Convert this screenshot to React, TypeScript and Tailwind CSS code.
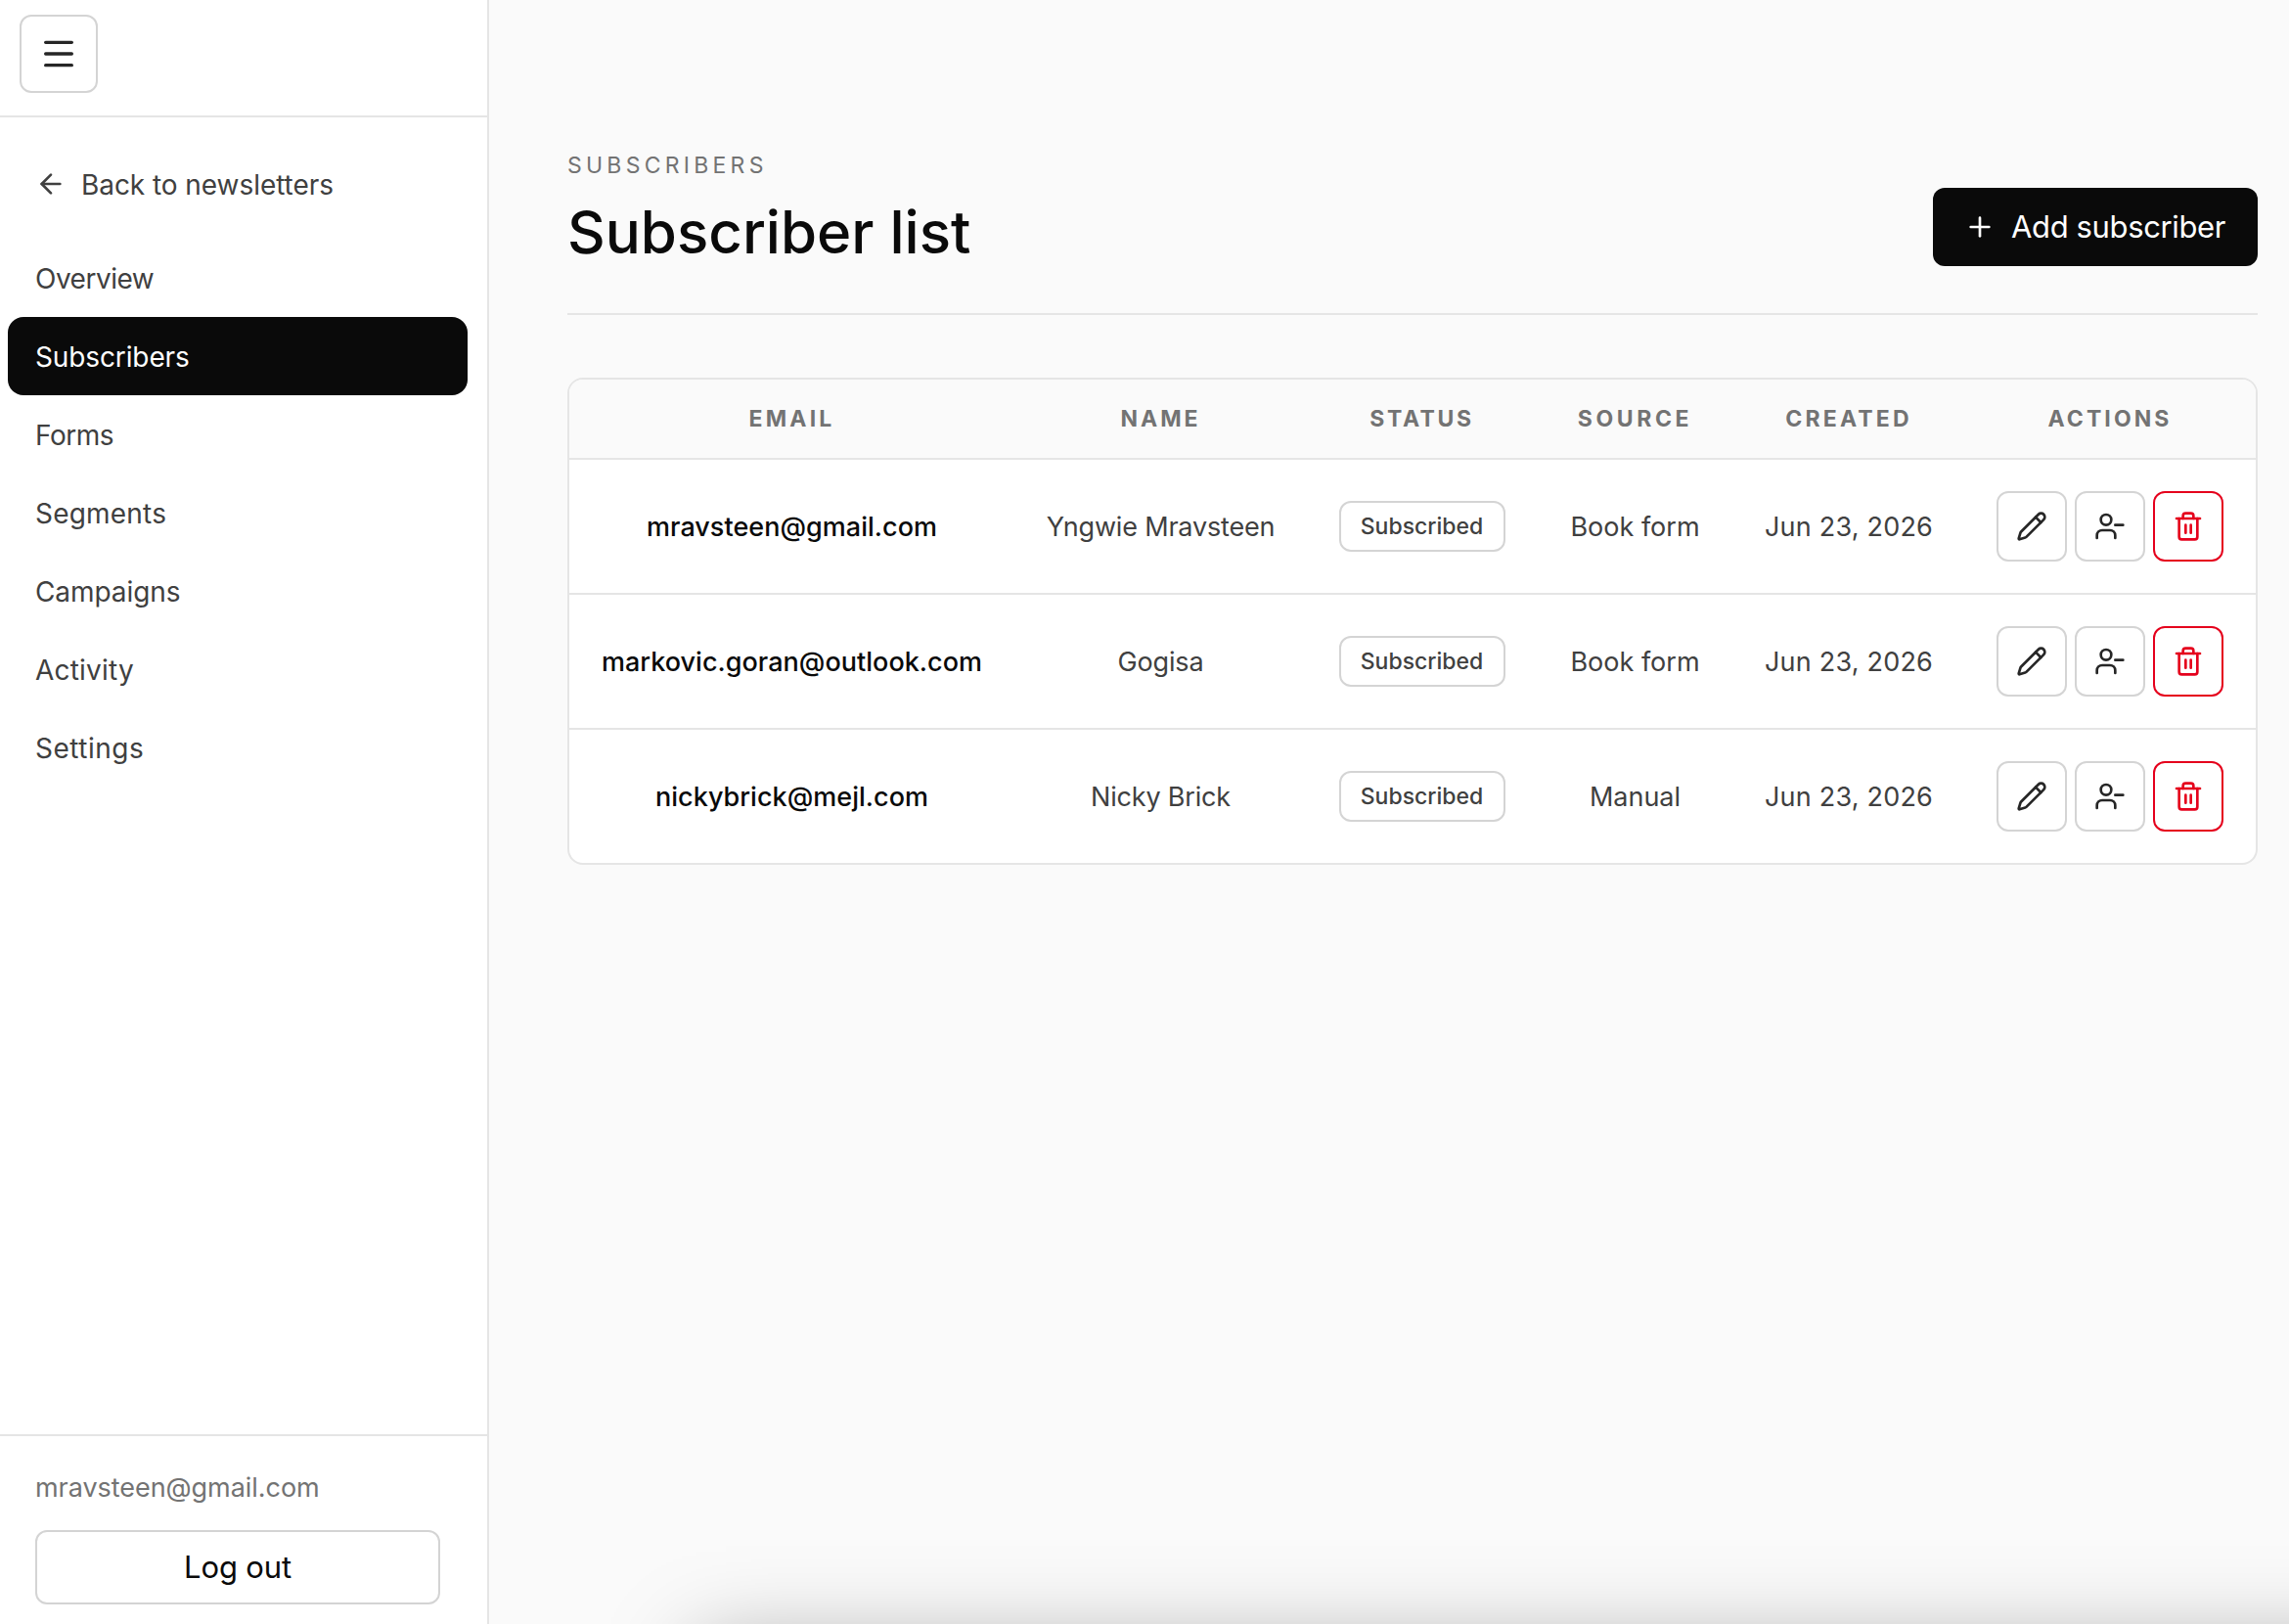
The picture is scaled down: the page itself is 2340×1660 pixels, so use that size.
import React from 'react';
import { ArrowLeft, Menu, Pencil, Plus, Trash2, UserMinus } from 'lucide-react';

const navItems = [
  { label: 'Overview', tracking: 'tracking-[-0.5px]' },
  { label: 'Subscribers', tracking: 'tracking-[-0.12px]', active: true },
  { label: 'Forms', tracking: 'tracking-[-0.5px]' },
  { label: 'Segments', tracking: 'tracking-[0.2px]' },
  { label: 'Campaigns', tracking: 'tracking-[-0.08px]' },
  { label: 'Activity', tracking: 'tracking-[0.2px]' },
  { label: 'Settings', tracking: 'tracking-[0.5px]' },
];

const columns = [
  { label: 'Email', style: 'w-[455px] tracking-[3.2px]' },
  { label: 'Name', style: 'w-[299px] tracking-[3px]' },
  { label: 'Status', style: 'w-[235px] tracking-[2.6px]' },
  { label: 'Source', style: 'w-[201px] tracking-[3.6px]' },
  { label: 'Created', style: 'w-[236px] tracking-[3.2px]' },
  { label: 'Actions', style: 'w-[298px] tracking-[3.1px]' },
];

const subscribers = [
  { email: 'mravsteen@gmail.com', name: 'Yngwie Mravsteen', source: 'Book form', created: 'Jun 23, 2026' },
  { email: 'markovic.goran@outlook.com', name: 'Gogisa', source: 'Book form', created: 'Jun 23, 2026' },
  { email: 'nickybrick@mejl.com', name: 'Nicky Brick', source: 'Manual', created: 'Jun 23, 2026' },
];

const Sidebar = () => (
  <aside className="flex h-full w-[500px] shrink-0 flex-col border-r-2 border-[#e5e5e5] bg-white">
    <div className="h-[120px] border-b-2 border-[#e5e5e5] pt-[15px] pl-5">
      <button className="flex size-20 items-center justify-center rounded-xl border-2 border-[#d4d4d4] text-[#262626]">
        <Menu size={40} />
      </button>
    </div>

    <nav className="flex flex-1 flex-col pt-[28px] pr-5 pl-2 text-[28px] text-[#404040]">
      <a className="flex h-20 items-center gap-[15px] pl-7">
        <ArrowLeft size={32} />
        <span className="pt-[2px] tracking-[-0.06px]">Back to newsletters</span>
      </a>
      <div className="mt-4 flex flex-col">
        {navItems.map((item) => (
          <a
            key={item.label}
            className={`flex h-20 items-center rounded-2xl pt-[2px] pl-7 ${item.tracking} ${
              item.active ? 'bg-[#0a0a0a] text-white' : ''
            }`}
          >
            {item.label}
          </a>
        ))}
      </div>
    </nav>

    <div className="h-[194px] border-t-2 border-[#e5e5e5] pt-8 pr-12 pl-9">
      <div className="h-16 text-[27px] leading-[41px] tracking-[-0.05px] text-[#737373]">mravsteen@gmail.com</div>
      <button className="flex h-[76px] w-full items-center justify-center rounded-xl border-2 border-[#d4d4d4] text-[31px] tracking-[-0.15px] text-[#0a0a0a]">
        Log out
      </button>
    </div>
  </aside>
);

const ActionButton = ({ children, danger = false }: { children: React.ReactNode; danger?: boolean }) => (
  <button
    className={`flex size-[72px] items-center justify-center rounded-xl border-2 ${
      danger ? 'border-[#e5001c] text-[#e5001c]' : 'border-[#d4d4d4] text-[#262626]'
    }`}
  >
    {children}
  </button>
);

const SubscriberTable = () => (
  <div className="mt-16 overflow-hidden rounded-2xl border-2 border-[#e5e5e5] bg-white">
    <table className="w-full table-fixed border-separate border-spacing-0 text-center">
      <thead>
        <tr className="bg-[#fafafa] text-[23px] text-[#737373]">
          {columns.map((column) => (
            <th key={column.label} className={`h-[82px] border-b-2 border-[#e5e5e5] p-0 font-bold uppercase ${column.style}`}>
              {column.label}
            </th>
          ))}
        </tr>
      </thead>
      <tbody className="[&>tr:last-child>td]:h-[136px] [&>tr:last-child>td]:border-b-0 [&>tr>td]:h-[138px] [&>tr>td]:border-b-2 [&>tr>td]:border-[#e5e5e5]">
        {subscribers.map((row) => (
          <tr key={row.email} className="text-[27px] text-[#404040]">
            <td className="pt-[2px] font-medium tracking-[0.03px] text-[#0a0a0a]">{row.email}</td>
            <td className="pt-[2px] tracking-[-0.18px]">{row.name}</td>
            <td>
              <span className="inline-flex h-[52px] w-[170px] items-center justify-center rounded-xl border-2 border-[#d4d4d4] align-middle text-[23px] font-medium">
                Subscribed
              </span>
            </td>
            <td className="pt-[2px]">{row.source}</td>
            <td className="pt-[2px] tracking-[0.22px]">{row.created}</td>
            <td>
              <div className="flex justify-center gap-2">
                <ActionButton>
                  <Pencil size={32} />
                </ActionButton>
                <ActionButton>
                  <UserMinus size={32} />
                </ActionButton>
                <ActionButton danger>
                  <Trash2 size={32} />
                </ActionButton>
              </div>
            </td>
          </tr>
        ))}
      </tbody>
    </table>
  </div>
);

const App = () => (
  <div className="relative flex h-[1660px] w-[2340px] overflow-hidden bg-[#fafafa] font-['Inter',sans-serif]">
    <Sidebar />

    <main className="flex-1 pt-[153px] pr-8 pl-20">
      <header className="flex h-[169px] items-start justify-between border-b-2 border-[#e5e5e5]">
        <div>
          <div className="text-[23px] leading-[32px] tracking-[4.25px] text-[#737373] uppercase">Subscribers</div>
          <h1 className="mt-3 text-[60px] leading-[80px] font-medium text-[#0a0a0a]">Subscriber list</h1>
        </div>
        <button className="mt-[39px] flex h-20 w-[332px] items-center gap-4 rounded-xl bg-[#0a0a0a] pl-8 text-[31px] tracking-[-0.37px] text-white">
          <Plus size={32} />
          <span className="whitespace-nowrap">Add subscriber</span>
        </button>
      </header>

      <SubscriberTable />
    </main>

    {/* soft shadow rising from below the window edge */}
    <div className="absolute top-[1684px] left-[712px] h-80 w-[2000px] shadow-[0_0_86px_rgba(0,0,0,0.35)]" />
  </div>
);

export default App;
